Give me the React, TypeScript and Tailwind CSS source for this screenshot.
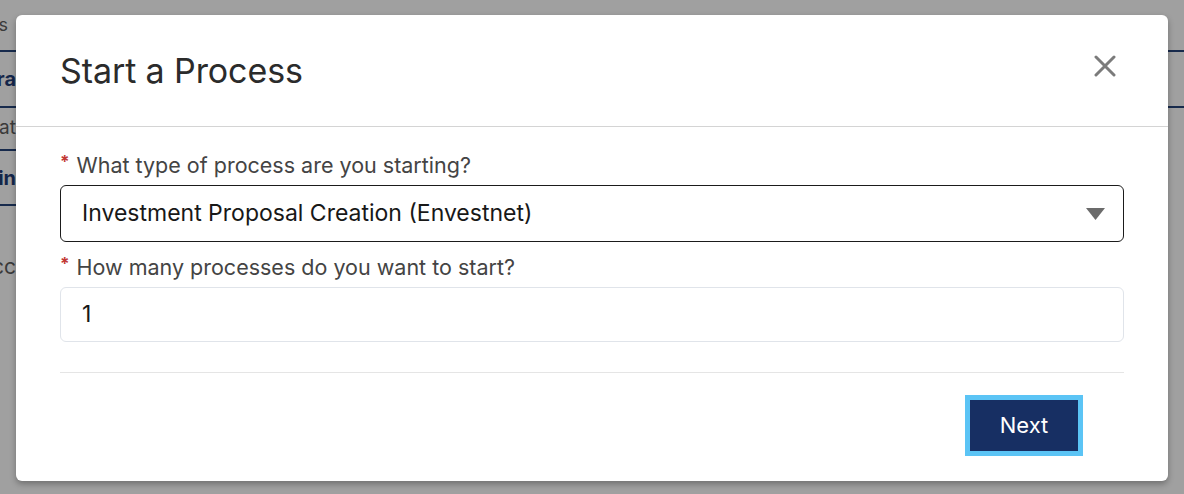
export default function App() {
  return (
    <div className="relative h-[494px] w-[1184px] overflow-hidden bg-[#a0a0a0] font-['Inter',sans-serif]">
      {/* page behind the overlay */}
      <div className="flex flex-col pt-[15px]">
        <div className="flex h-[37px] w-full items-start border-b-2 border-[#172a4c]">
          <div className="flex w-[16px] justify-end overflow-hidden whitespace-nowrap pr-[8px] text-[18px] leading-[20px] text-[#3a3a3a]">
            Details
          </div>
        </div>
        <div className="flex h-[56px] w-full items-center border-b-2 border-[#172a4c]">
          <div className="flex w-[16px] justify-end overflow-hidden whitespace-nowrap text-[20px] font-bold text-[#14264a]">
            Opera
          </div>
        </div>
        <div className="flex h-[43px] w-[16px] items-center border-b-2 border-[#172a4c]">
          <div className="flex w-[16px] justify-end overflow-hidden whitespace-nowrap text-[19px] text-[#3a3a3a]">
            Stat
          </div>
        </div>
        <div className="flex h-[55px] w-[16px] items-center border-b-2 border-[#172a4c]">
          <div className="flex w-[16px] justify-end overflow-hidden whitespace-nowrap text-[20px] font-bold text-[#14264a]">
            Admin
          </div>
        </div>
        <div className="mt-[45px] flex w-[16px] justify-end overflow-hidden whitespace-nowrap text-[21px] text-[#3a3a3a]">
          Acc
        </div>
      </div>

      {/* modal */}
      <div className="absolute left-[16px] top-[15px] flex h-[466px] w-[1152px] flex-col rounded-md bg-white shadow-[0_3px_6px_rgba(0,0,0,0.3)]">
        <div className="flex h-[112px] items-center justify-between border-b border-[#d4d4d4] pl-[44px] pr-[52px]">
          <h2 className="text-[34px] font-normal tracking-[-0.1px] text-[#2b2b2b]">Start a Process</h2>
          <svg width="22" height="22" viewBox="0 0 22 22" className="mt-[-10px]">
            <path d="M2 2 L20 20 M20 2 L2 20" stroke="#7b7b7b" strokeWidth="3" strokeLinecap="round" />
          </svg>
        </div>

        <div className="flex flex-col px-[44px] pt-[25px]">
          <label className="flex items-start text-[21.5px] leading-[26px] text-[#444]">
            <span className="mr-[7px] mt-[-3px] text-[17px] font-bold text-[#c23934]">*</span>
            What type of process are you starting?
          </label>
          <div className="mt-[7px] flex h-[57px] items-center justify-between rounded-md border border-[#1b1b1b] pl-[21px] pr-[18px]">
            <span className="text-[23px] text-[#181818]">Investment Proposal Creation (Envestnet)</span>
            <svg width="19" height="12" viewBox="0 0 19 12">
              <path d="M0 0 L19 0 L9.5 12 Z" fill="#6b6b6b" />
            </svg>
          </div>

          <label className="mt-[12px] flex items-start text-[21.5px] leading-[26px] text-[#444]">
            <span className="mr-[7px] mt-[-3px] text-[17px] font-bold text-[#c23934]">*</span>
            How many processes do you want to start?
          </label>
          <div className="mt-[7px] flex h-[55px] items-center rounded-md border border-[#e0e4ea] pl-[21px]">
            <span className="text-[23px] text-[#181818]">1</span>
          </div>

          <div className="mt-[30px] border-t border-[#e5e5e5]" />

          <div className="flex justify-end pr-[46px] pt-[27px]">
            <button className="h-[51px] w-[108px] bg-[#172f63] text-[22px] text-white ring-[5px] ring-[#5bc4f5]">
              Next
            </button>
          </div>
        </div>
      </div>
    </div>
  );
}
